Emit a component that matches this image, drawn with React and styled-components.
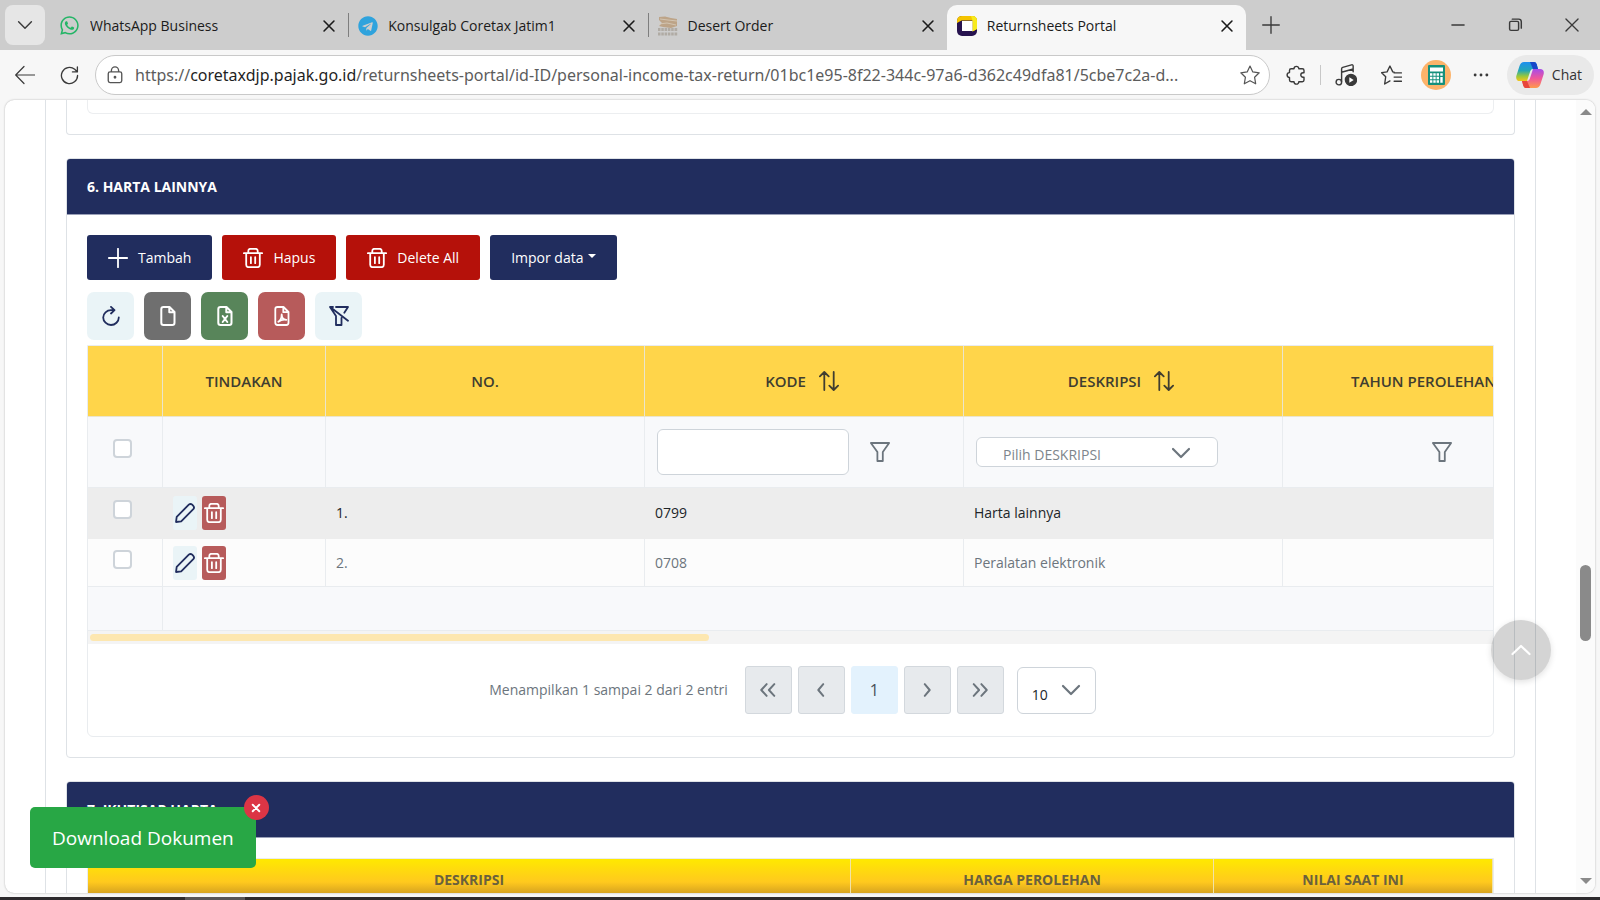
import { useState } from "react";
import styled, { createGlobalStyle, css } from "styled-components";
import { FaWhatsapp, FaTelegram } from "react-icons/fa";

const GlobalStyle = createGlobalStyle`
  *, *::before, *::after {
    box-sizing: border-box;
  }

  body {
    margin: 0;
    background: #f7f7f7;
    color: #6c757d;
    font-family: "Open Sans", "Noto Sans", sans-serif;
    font-size: 14px;
    line-height: 20px;
  }

  button, input, select {
    font: inherit;
    color: inherit;
    margin: 0;
  }

  button {
    cursor: pointer;
  }
`;

/* ---------- icons ---------- */

const Svg = styled.svg.attrs({ viewBox: "0 0 20 20", "aria-hidden": true })`
  display: block;
  flex: none;
  width: ${({ $size = 20 }) => $size}px;
  height: ${({ $size = 20 }) => $size}px;
  fill: none;
  stroke: currentColor;
  stroke-width: ${({ $stroke = 1.5 }) => $stroke};
  stroke-linecap: round;
  stroke-linejoin: round;
`;

const icons = {
  chevronDown: <path d="M2 6l8 8 8-8" />,
  chevronUp: <path d="M1.500 14l8.500-8 8.500 8" />,
  chevronLeft: <path d="M12.500 3.500L7 10l5.500 6.500" />,
  chevronRight: <path d="M7.500 3.500L13 10l-5.500 6.500" />,
  chevronsLeft: <path d="M8.500 3.500L2.500 10l6 6.500M17 3.500L11 10l6 6.500" />,
  chevronsRight: <path d="M3 3.500L9 10l-6 6.500M11.500 3.500l6 6.500-6 6.500" />,
  close: <path d="M4.500 4.500l11 11M15.500 4.500l-11 11" />,
  plus: <path d="M10 .8v18.400M.8 10h18.400" />,
  minus: <path d="M4 10h12" />,
  restore: (
    <path d="M4 7.500q0-1.500 1.500-1.500h7q1.500 0 1.500 1.500v7q0 1.500-1.500 1.500h-7q-1.500 0-1.500-1.500zM7 3.500h7q3 0 3 3v7" />
  ),
  back: <path d="M19.500 10H1M9 1.500L.7 10 9 18.500" />,
  reload: <path d="M18.500 10a8.500 8.500 0 1 1-3-6.500l2.600 2.600M18.300 1v5.200h-5.200" />,
  lock: (
    <>
      <path d="M2.500 8.500q0-2 2-2h11q2 0 2 2v8q0 2-2 2h-11q-2 0-2-2zM6 6.500V5a4 4 0 0 1 8 0v1.500" />
      <circle cx="10" cy="12.500" r=".8" fill="currentColor" />
    </>
  ),
  star: (
    <path d="M10 1l2.800 5.900 6.400.9-4.600 4.500 1.100 6.500L10 15.700l-5.700 3.100 1.100-6.500L.8 7.800l6.400-.9z" />
  ),
  puzzle: (
    <path d="M5.200 3.800H8a2.400 2.400 0 0 1 4.800 0h3.500q1.700 0 1.700 1.700v2.300h-1a2.200 2.200 0 0 0 0 4.400h1v2.800q0 1.700-1.700 1.700h-3.500a2.400 2.400 0 0 1-4.800 0H5.200q-1.700 0-1.700-1.700v-2.600a2.400 2.400 0 0 1 0-4.800V5.500q0-1.700 1.700-1.700z" />
  ),
  favourites: (
    <path d="M12.500 6.800l-1.300-.3L8.500 1 5.800 6.500l-5.200.8 3.900 3.800-1 7 5-2.900M12.500 7.500h7M12.500 11.500h7M12.500 15.500h7" />
  ),
  media: (
    <>
      <path d="M6 16V4.500q0-1 1-1.400l8-2.300q1.500-.3 1.500 1V7M6 7.500l10.500-3" />
      <circle cx="3.500" cy="16.500" r="2.500" />
      <circle cx="14.500" cy="14.500" r="5" fill="currentColor" />
      <path d="M13 12v5l4-2.500z" fill="#fff" stroke="none" />
    </>
  ),
  dots: (
    <g fill="currentColor" stroke="none">
      <circle cx="3.500" cy="10" r="1.600" />
      <circle cx="10" cy="10" r="1.600" />
      <circle cx="16.500" cy="10" r="1.600" />
    </g>
  ),
  trash: (
    <path d="M.8 5.200h18.400M3.200 5.200v11.600q0 2.400 2.400 2.400h8.800q2.400 0 2.400-2.400V5.200M5.300 5.200V3q0-2.200 2.200-2.200h5Q14.700.8 14.700 3v2.200M7.900 9.200v6M12.200 9.200v6" />
  ),
  pencil: (
    <path d="M1 19l.7-5.200L13.800 1.700q1.700-1.500 3.400 0l1.100 1.100q1.500 1.700 0 3.400L6.200 18.300z" />
  ),
  refresh: (
    <path d="M12.500 4.200H10C5.800 4.200 2.200 7.400 2.200 11.400S5.800 19 10 19s7.800-3.500 7.800-7.500M10 .9l3.500 3.300L10 7.500" />
  ),
  file: (
    <path d="M5.500 1h6L16.500 6v10.800q0 2.200-2.200 2.200H5.500q-2.200 0-2.200-2.200V3.200Q3.300 1 5.500 1zM11.300 1v5.200h5.200" />
  ),
  excel: (
    <path d="M5.500 1h6L16.500 6v10.800q0 2.200-2.200 2.200H5.500q-2.200 0-2.200-2.200V3.200Q3.300 1 5.500 1zM11.300 1v5.200h5.200M7.700 10l4.600 6M12.300 10l-4.600 6" />
  ),
  pdf: (
    <path d="M5.500 1h6L16.500 6v10.800q0 2.200-2.200 2.200H5.500q-2.200 0-2.200-2.200V3.200Q3.300 1 5.500 1zM11.300 1v5.200h5.200M6.300 15.800q3.400-2.200 3.400-7.300 0 5 4.600 5.300-4.300-.8-8 2z" />
  ),
  filter: <path d="M.9 1h18.200l-6.300 9v9H7.400v-9z" />,
  filterSlash: (
    <path d="M7 1h12l-3.700 5.800M4 1H1l6 9v9h5.500v-7M1.500 1.200l17.500 13.500" />
  ),
  sort: (
    <path d="M5.300 19V1.200M.9 5.400L5.300 1l4.400 4.400M14.700 1v17.800M10.300 14.600l4.400 4.400 4.400-4.400" />
  ),
};

const Icon = ({ name, size, stroke }) => (
  <Svg $size={size} $stroke={stroke}>
    {icons[name]}
  </Svg>
);

const PortalLogo = () => (
  <svg width="20" height="20" viewBox="0 0 20 20" aria-hidden="true">
    <rect width="20" height="20" rx="5" fill="#27134f" />
    <path d="M0 7V5q0-5 5-5h10q5 0 5 5v8l-4.500 2.500V4.500H4.500z" fill="#f5c400" />
    <path d="M14 0h1q5 0 5 5v8l-4.500 2.500V4.500z" fill="#f7ea1c" />
    <rect x="5" y="5" width="10.500" height="10" fill="#fff" />
  </svg>
);

const DesertLogo = () => (
  <svg width="20" height="20" viewBox="0 0 20 20" aria-hidden="true">
    <path d="M1 1l6-.5 6 1.500 6 1v7l-6 2-8-1-4-1 3-3-3-3z" fill="#bda488" />
    <path d="M2 3l8 1 9 1M1 8l8-1 9 2" stroke="#d8cdbd" strokeWidth=".8" fill="none" />
    <path d="M0 13.500h20M0 18h20" stroke="#b0aba4" strokeWidth="3" strokeDasharray="2.500 .8" />
  </svg>
);

const CopilotLogo = () => (
  <svg width="28" height="26" viewBox="0 0 28 26" aria-hidden="true">
    <defs>
      <linearGradient id="copilotA" x1="0" y1="0" x2="0" y2="1">
        <stop offset="0" stopColor="#1d8ff0" />
        <stop offset=".45" stopColor="#23a7b5" />
        <stop offset=".75" stopColor="#9ac83a" />
        <stop offset="1" stopColor="#f5c51c" />
      </linearGradient>
      <linearGradient id="copilotB" x1="0" y1="0" x2="0" y2="1">
        <stop offset="0" stopColor="#a64bea" />
        <stop offset=".5" stopColor="#f0579a" />
        <stop offset="1" stopColor="#ff9a4a" />
      </linearGradient>
    </defs>
    <path d="M8 0h10q2 0 2.700 2.200L22 7h-5q-2 0-2.700 2L11 19H4q-4.500 0-3.700-5L3.500 4Q4.800 0 8 0z" fill="url(#copilotA)" />
    <path d="M14 0h4q2 0 2.700 2.200L22 7h-5z" fill="#1747c9" />
    <path d="M20 26H10q-2 0-2.700-2.200L6 19h5q2 0 2.700-2L17 7h7q4.500 0 3.700 5l-3.200 10q-1.300 4-4.500 4z" fill="url(#copilotB)" />
    <path d="M14 26h-4q-2 0-2.700-2.200L6 19h5z" fill="#e8453c" />
  </svg>
);

const CalculatorLogo = () => (
  <svg width="30" height="30" viewBox="0 0 30 30" aria-hidden="true">
    <circle cx="15" cy="15" r="15" fill="#fcb36a" />
    <rect x="7" y="5" width="17" height="20" rx="1" fill="#15907c" />
    <rect x="9" y="7.500" width="13" height="4" fill="#fff" />
    <path d="M9 14.500h9M9 18h9M9 21.500h9" stroke="#fff" strokeWidth="2.400" strokeDasharray="2.400 .9" />
    <path d="M20.500 13.300v2.400M20.500 17v5.700" stroke="#fff" strokeWidth="2.400" />
  </svg>
);

/* ---------- browser chrome ---------- */

const Window = styled.div`
  display: flex;
  flex-direction: column;
  height: 100vh;
  overflow: hidden;
`;

const TabStrip = styled.header`
  display: flex;
  align-items: center;
  flex: none;
  height: 50px;
  padding-left: 5px;
  background: #cdcdcd;
  color: #1b1b1b;
`;

const PlainButton = styled.button`
  display: flex;
  align-items: center;
  justify-content: center;
  flex: none;
  width: ${({ $width = 40 }) => $width}px;
  height: 40px;
  padding: 0;
  border: 0;
  border-radius: 8px;
  background: ${({ $filled }) => ($filled ? "#e6e6e6" : "none")};
  color: #3a3a3a;
`;

const Tabs = styled.nav`
  display: flex;
  flex: 0 1 1201px;
  min-width: 0;
  align-self: stretch;
  padding: 5px 0 0 4px;
`;

const Tab = styled.div`
  position: relative;
  display: flex;
  flex: 1 1 0;
  min-width: 0;
  align-items: center;
  gap: 10px;
  height: 45px;
  padding: 0 10px 4px;
  border-radius: 10px 10px 0 0;

  ${({ $active }) =>
    $active
      ? css`
          background: #f7f7f7;
        `
      : css`
          & + &::before {
            content: "";
            position: absolute;
            left: 0;
            top: 8px;
            width: 1px;
            height: 24px;
            background: #7e7e7e;
          }
        `}
`;

const TabTitle = styled.a`
  flex: 1;
  overflow: hidden;
  white-space: nowrap;
  color: inherit;
  text-decoration: none;
`;

const TabClose = styled.button`
  display: flex;
  padding: 0;
  border: 0;
  background: none;
`;

const WindowControls = styled.div`
  display: flex;
  margin-left: auto;
`;

const Toolbar = styled.div`
  display: flex;
  align-items: center;
  flex: none;
  height: 50px;
  padding: 0 6px 0 3px;
`;

const Address = styled.div`
  display: flex;
  align-items: center;
  flex: 1;
  min-width: 0;
  gap: 11px;
  height: 40px;
  margin: 0 2px 0 3px;
  padding: 0 9px 0 10px;
  border: 1px solid #c9c9c9;
  border-radius: 20px;
  background: #fff;
  color: #555;
`;

const Url = styled.a`
  flex: 1;
  overflow: hidden;
  white-space: nowrap;
  color: #5c5c5c;
  font-family: "Noto Sans", sans-serif;
  font-size: 16px;
  line-height: 24px;
  text-decoration: none;

  b {
    font-weight: 400;
    color: #1f1f1f;
  }
`;

const Divider = styled.span`
  width: 1px;
  height: 20px;
  background: #c8c8c8;
`;

const ChatButton = styled.button`
  display: flex;
  align-items: center;
  gap: 8px;
  height: 40px;
  margin-left: 4px;
  padding: 0 12px 0 9px;
  border: 0;
  border-radius: 20px;
  background: #e9e9e9;
  color: #333;
`;

const Taskbar = styled.footer`
  flex: none;
  height: 3px;
  margin-top: 4px;
  background: linear-gradient(90deg, #2d2a2d 185px, #585558 185px 245px, #2d2a2d 245px);
`;

/* ---------- page ---------- */

const Viewport = styled.div`
  position: relative;
  display: flex;
  flex: 1;
  min-height: 0;
  margin: 0 5px;
  overflow: hidden;
  border-radius: 9px;
  background: #fff;
  box-shadow: 0 0 2px rgba(0, 0, 0, 0.3);
`;

const Content = styled.main`
  display: flex;
  flex: 1;
  flex-direction: column;
  gap: 23px;
  min-width: 0;
  margin: 0 40px;
  padding: 0 20px;
  border: solid #dee2e6;
  border-width: 0 1px;
`;

const ScrollTrack = styled.div`
  display: flex;
  flex: none;
  flex-direction: column;
  justify-content: space-between;
  align-items: center;
  width: 19px;
  padding: 9px 0;
  background: #fbfbfb;
`;

const ScrollThumb = styled.span`
  width: 11px;
  height: 76px;
  margin-top: 213px;
  border-radius: 6px;
  background: #8a8a8a;
`;

const ScrollArrow = styled.span`
  border: solid transparent;
  border-width: 0 6px;
  ${({ $down }) => ($down ? "border-top: 6px solid #8a8a8a;" : "border-bottom: 6px solid #8a8a8a;")}
`;

const Card = styled.section`
  flex: none;
  border: 1px solid #dee2e6;
  border-top-width: ${({ $cut }) => ($cut ? 0 : "1px")};
  border-radius: ${({ $cut }) => ($cut ? "0 0 4px 4px" : "4px")};
`;

const CardTitle = styled.h2`
  margin: 0;
  padding: 18px 20px 17px;
  border-bottom: 1px solid #9aa0b8;
  border-radius: 3px 3px 0 0;
  background: #212d5e;
  color: #fff;
  font-size: 14px;
  font-weight: 700;
`;

const CardBody = styled.div`
  padding: ${({ $cut }) => ($cut ? "0 20px 20px" : "20px")};
`;

const PanelEnd = styled.div`
  height: 14px;
  border: 1px solid #eceef0;
  border-top: 0;
  border-radius: 0 0 6px 6px;
`;

const ButtonRow = styled.div`
  display: flex;
  gap: 10px;
  margin-bottom: ${({ $gap }) => $gap}px;
`;

const ActionButton = styled.button`
  display: flex;
  align-items: center;
  gap: 10px;
  height: 45px;
  padding: 0 21px;
  border: 0;
  border-radius: 3px;
  background: ${({ $danger }) => ($danger ? "#b5110a" : "#212d5e")};
  color: #fff;
`;

const Caret = styled.span`
  margin: 0 0 3px -6px;
  border: solid transparent;
  border-width: 4px 4px 0;
  border-top-color: #fff;
`;

const ToolButton = styled.button`
  display: flex;
  align-items: center;
  justify-content: center;
  width: 47px;
  height: 48px;
  padding: 0;
  border: 0;
  border-radius: 7px;
  background: ${({ $bg }) => $bg};
  color: ${({ $color = "#fff" }) => $color};
`;

const Panel = styled.div`
  overflow: hidden;
  border: 1px solid #e9ecef;
  border-radius: 0 0 6px 6px;
`;

const TableClip = styled.div`
  overflow: hidden;
`;

const Table = styled.table`
  width: ${({ $width }) => $width};
  table-layout: fixed;
  border-collapse: separate;
  border-spacing: 0;
`;

const HeadCell = styled.th`
  height: 71px;
  padding: 0;
  border: solid #ebe5cc;
  border-width: 0 1px 1px 0;
  background: #ffd54a;
  color: #403d30;
  font-size: 15px;
  font-weight: 600;
`;

const HeadLabel = styled.span`
  display: flex;
  align-items: center;
  justify-content: center;
  gap: 13px;
  padding-right: 4px;
`;

const FilterCell = styled.td`
  height: ${({ $footer }) => ($footer ? 44 : 71)}px;
  padding: 0 ${({ $check }) => ($check ? "5px 0 0" : "12px")};
  border: solid #e9ecef;
  border-width: 0 1px 1px 0;
  background: #f8f9fb;
`;

const FilterBox = styled.div`
  display: flex;
  align-items: center;
  justify-content: ${({ $center }) => ($center ? "center" : "flex-start")};
  gap: 21px;
`;

const TextFilter = styled.input`
  width: 192px;
  height: 46px;
  padding: 0 12px;
  border: 1px solid #ced4da;
  border-radius: 6px;
  background: #fff;
`;

const SelectWrap = styled.label`
  position: relative;
  display: inline-flex;
  color: #6c757d;

  svg {
    position: absolute;
    right: ${({ $inset }) => $inset}px;
    top: ${({ $top }) => $top}px;
    pointer-events: none;
  }
`;

const Select = styled.select`
  width: ${({ $width }) => $width}px;
  height: ${({ $height }) => $height}px;
  padding: ${({ $padding }) => $padding};
  border: 1px solid #ced4da;
  border-radius: 6px;
  appearance: none;
  background: #fff;
  color: ${({ $dark }) => ($dark ? "#212529" : "#7d858c")};
`;

const Checkbox = styled.input.attrs({ type: "checkbox" })`
  display: block;
  width: 19px;
  height: 19px;
  margin: 0 auto 7px;
  border: 2px solid #ced4da;
  border-radius: 4px;
  appearance: none;
  background: #fff;

  &:checked {
    background: #212d5e;
  }
`;

const Cell = styled.td`
  padding: 0 ${({ $check }) => ($check ? "5px 0 0" : "10px")};
`;

const Row = styled.tr`
  height: ${({ $selected }) => ($selected ? 51 : 48)}px;
  background: ${({ $selected }) => ($selected ? "#ededed" : "#fcfcfc")};
  color: ${({ $selected }) => ($selected ? "#212529" : "#6c757d")};

  ${Cell} {
    border: solid ${({ $selected }) => ($selected ? "#ededed" : "#e9ecef")};
    border-width: 0 1px 1px 0;
  }
`;

const RowActions = styled.div`
  display: flex;
  gap: 5px;
`;

const RowButton = styled.button`
  display: flex;
  align-items: center;
  justify-content: center;
  width: 24px;
  height: 34px;
  padding: 0;
  border: 0;
  border-radius: 3px;
  background: ${({ $danger }) => ($danger ? "#b75b5b" : "#eaf4f7")};
  color: ${({ $danger }) => ($danger ? "#fff" : "#212d5e")};
`;

const HScroll = styled.div`
  padding: 3px 2px;
  background: #f4f4f4;
`;

const HThumb = styled.div`
  width: 44.2%;
  height: 7px;
  border-radius: 4px;
  background: #fde7b0;
`;

const Paginator = styled.div`
  display: flex;
  align-items: center;
  justify-content: center;
  gap: 6px;
  padding: 22px 0 22px 4px;

  p {
    margin: 0 11px 0 0;
  }

  label {
    margin-left: 7px;
  }
`;

const PageButton = styled.button`
  display: flex;
  align-items: center;
  justify-content: center;
  width: 47px;
  height: 48px;
  padding: 0;
  border: 1px solid ${({ $current }) => ($current ? "#e3f2fd" : "#d3d8dd")};
  border-radius: 3px;
  background: ${({ $current }) => ($current ? "#e3f2fd" : "#e7eaed")};
  color: ${({ $current }) => ($current ? "#495057" : "#6c757d")};
  font-size: 16px;
`;

const SummaryHead = styled.th`
  width: ${({ $width }) => $width};
  height: 42px;
  padding: 0;
  border-right: 1px solid #f1e3a8;
  color: #6a613c;
  font-size: 14px;
  font-weight: 700;
`;

const SummaryRow = styled.tr`
  background: linear-gradient(#ffe900, #ffc91e 55%, #d9a520 80%);
`;

/* ---------- floating parts ---------- */

const Download = styled.div`
  position: absolute;
  left: 25px;
  bottom: 25px;
`;

const DownloadButton = styled.button`
  display: block;
  height: 61px;
  padding: 0 22px;
  border: 0;
  border-radius: 5px;
  background: #28a745;
  color: #fff;
  font-size: 19px;
`;

const DismissButton = styled.button`
  position: absolute;
  top: -12px;
  right: -13px;
  display: flex;
  align-items: center;
  justify-content: center;
  width: 25px;
  height: 25px;
  padding: 0;
  border: 0;
  border-radius: 50%;
  background: #dc3545;
  color: #fff;
`;

const TopButton = styled.button`
  position: absolute;
  right: 44px;
  bottom: 213px;
  display: flex;
  align-items: center;
  justify-content: center;
  width: 60px;
  height: 60px;
  border: 0;
  border-radius: 50%;
  background: rgba(0, 0, 0, 0.17);
  box-shadow: 0 2px 6px rgba(0, 0, 0, 0.12);
  color: #fff;
`;

const tabs = [
  { title: "WhatsApp Business", icon: <FaWhatsapp size={21} color="#25b567" /> },
  { title: "Konsulgab Coretax Jatim1", icon: <FaTelegram size={20} color="#2fa3dd" /> },
  { title: "Desert Order", icon: <DesertLogo /> },
  { title: "Returnsheets Portal", icon: <PortalLogo />, active: true },
];

const assets = [
  { no: "1.", code: "0799", description: "Harta lainnya", selected: true },
  { no: "2.", code: "0708", description: "Peralatan elektronik" },
];

const BrowserChrome = () => (
  <>
    <TabStrip>
      <PlainButton $filled aria-label="Search tabs">
        <Icon name="chevronDown" size={16} stroke={1.8} />
      </PlainButton>
      <Tabs>
        {tabs.map((tab) => (
          <Tab key={tab.title} $active={tab.active}>
            {tab.icon}
            <TabTitle href="#">{tab.title}</TabTitle>
            <TabClose aria-label={`Close ${tab.title}`}>
              <Icon name="close" size={18} stroke={1.8} />
            </TabClose>
          </Tab>
        ))}
      </Tabs>
      <PlainButton $width={50} aria-label="New tab">
        <Icon name="plus" size={18} />
      </PlainButton>
      <WindowControls>
        <PlainButton $width={57} aria-label="Minimize">
          <Icon name="minus" stroke={1.6} />
        </PlainButton>
        <PlainButton $width={57} aria-label="Restore">
          <Icon name="restore" size={18} stroke={1.6} />
        </PlainButton>
        <PlainButton $width={57} aria-label="Close">
          <Icon name="close" size={22} stroke={1.2} />
        </PlainButton>
      </WindowControls>
    </TabStrip>

    <Toolbar>
      <PlainButton $width={44} aria-label="Back">
        <Icon name="back" stroke={1.2} />
      </PlainButton>
      <PlainButton $width={45} aria-label="Reload">
        <Icon name="reload" size={19} stroke={1.4} />
      </PlainButton>
      <Address>
        <Icon name="lock" size={18} />
        <Url href="#">
          https://<b>coretaxdjp.pajak.go.id</b>
          /returnsheets-portal/id-ID/personal-income-tax-return/01bc1e95-8f22-344c-97a6-d362c49dfa81/5cbe7c2a-d...
        </Url>
        <Icon name="star" stroke={1.2} />
      </Address>
      <PlainButton $width={48} aria-label="Extensions">
        <Icon name="puzzle" size={20} stroke={1.4} />
      </PlainButton>
      <Divider />
      <PlainButton $width={50} aria-label="Media">
        <Icon name="media" size={22} stroke={1.3} />
      </PlainButton>
      <PlainButton $width={42} aria-label="Favorites">
        <Icon name="favourites" size={21} stroke={1.3} />
      </PlainButton>
      <PlainButton $width={46} aria-label="Profile">
        <CalculatorLogo />
      </PlainButton>
      <PlainButton $width={44} aria-label="More">
        <Icon name="dots" size={18} />
      </PlainButton>
      <ChatButton>
        <CopilotLogo />
        Chat
      </ChatButton>
    </Toolbar>
  </>
);

const AssetTable = () => {
  const [checked, setChecked] = useState([]);

  const toggle = (no) =>
    setChecked(checked.includes(no) ? checked.filter((n) => n !== no) : [...checked, no]);

  return (
    <TableClip>
      <Table $width="1833px">
        <colgroup>
          <col width="75" />
          <col width="163" />
          <col width="319" />
          <col width="319" />
          <col width="319" />
          <col width="319" />
          <col width="319" />
        </colgroup>
        <thead>
          <tr>
            <HeadCell />
            <HeadCell>TINDAKAN</HeadCell>
            <HeadCell>NO.</HeadCell>
            {["KODE", "DESKRIPSI", "TAHUN PEROLEHAN"].map((label) => (
              <HeadCell key={label}>
                <HeadLabel>
                  {label}
                  <Icon name="sort" stroke={1.8} />
                </HeadLabel>
              </HeadCell>
            ))}
            <HeadCell />
          </tr>
        </thead>
        <tbody>
          <tr>
            <FilterCell $check>
              <Checkbox
                aria-label="Pilih semua"
                checked={checked.length === assets.length}
                onChange={(e) => setChecked(e.target.checked ? assets.map((a) => a.no) : [])}
              />
            </FilterCell>
            <FilterCell />
            <FilterCell />
            <FilterCell>
              <FilterBox>
                <TextFilter aria-label="Filter kode" />
                <Icon name="filter" stroke={1.8} />
              </FilterBox>
            </FilterCell>
            <FilterCell>
              <SelectWrap $inset={27} $top={6}>
                <Select
                  $width={242}
                  $height={30}
                  $padding="5px 40px 0 26px"
                  aria-label="Filter deskripsi"
                >
                  <option>Pilih DESKRIPSI</option>
                </Select>
                <Icon name="chevronDown" stroke={2.2} />
              </SelectWrap>
            </FilterCell>
            <FilterCell>
              <FilterBox $center>
                <Icon name="filter" stroke={1.8} />
              </FilterBox>
            </FilterCell>
            <FilterCell />
          </tr>
          {assets.map((asset) => (
            <Row key={asset.no} $selected={asset.selected}>
              <Cell $check>
                <Checkbox
                  aria-label={`Pilih ${asset.description}`}
                  checked={checked.includes(asset.no)}
                  onChange={() => toggle(asset.no)}
                />
              </Cell>
              <Cell>
                <RowActions>
                  <RowButton aria-label="Ubah">
                    <Icon name="pencil" stroke={1.8} />
                  </RowButton>
                  <RowButton $danger aria-label="Hapus">
                    <Icon name="trash" stroke={1.8} />
                  </RowButton>
                </RowActions>
              </Cell>
              <Cell>{asset.no}</Cell>
              <Cell>{asset.code}</Cell>
              <Cell>{asset.description}</Cell>
              <Cell />
              <Cell />
            </Row>
          ))}
        </tbody>
        <tfoot>
          <tr>
            <FilterCell $footer />
            <FilterCell $footer colSpan={6} />
          </tr>
        </tfoot>
      </Table>
    </TableClip>
  );
};

const App = () => (
  <>
    <GlobalStyle />
    <Window>
      <BrowserChrome />

      <Viewport>
        <Content>
          <Card $cut>
            <CardBody $cut>
              <PanelEnd />
            </CardBody>
          </Card>

          <Card>
            <CardTitle>6. HARTA LAINNYA</CardTitle>
            <CardBody>
              <ButtonRow $gap={12}>
                <ActionButton>
                  <Icon name="plus" stroke={1.8} />
                  Tambah
                </ActionButton>
                <ActionButton $danger>
                  <Icon name="trash" stroke={1.8} />
                  Hapus
                </ActionButton>
                <ActionButton $danger>
                  <Icon name="trash" stroke={1.8} />
                  Delete All
                </ActionButton>
                <ActionButton>
                  Impor data
                  <Caret />
                </ActionButton>
              </ButtonRow>
              <ButtonRow $gap={5}>
                <ToolButton $bg="#eaf4f7" $color="#212d5e" aria-label="Muat ulang">
                  <Icon name="refresh" stroke={1.8} />
                </ToolButton>
                <ToolButton $bg="#6f6f6f" aria-label="Ekspor CSV">
                  <Icon name="file" stroke={2} />
                </ToolButton>
                <ToolButton $bg="#58855a" aria-label="Ekspor Excel">
                  <Icon name="excel" stroke={2} />
                </ToolButton>
                <ToolButton $bg="#b75b5b" aria-label="Ekspor PDF">
                  <Icon name="pdf" stroke={1.8} />
                </ToolButton>
                <ToolButton $bg="#eaf4f7" $color="#212d5e" aria-label="Hapus filter">
                  <Icon name="filterSlash" stroke={1.8} />
                </ToolButton>
              </ButtonRow>

              <Panel>
                <AssetTable />
                <HScroll>
                  <HThumb />
                </HScroll>
                <Paginator>
                  <p>Menampilkan 1 sampai 2 dari 2 entri</p>
                  <PageButton aria-label="Halaman pertama">
                    <Icon name="chevronsLeft" size={18} stroke={2.2} />
                  </PageButton>
                  <PageButton aria-label="Sebelumnya">
                    <Icon name="chevronLeft" size={18} stroke={2.2} />
                  </PageButton>
                  <PageButton $current>1</PageButton>
                  <PageButton aria-label="Berikutnya">
                    <Icon name="chevronRight" size={18} stroke={2.2} />
                  </PageButton>
                  <PageButton aria-label="Halaman terakhir">
                    <Icon name="chevronsRight" size={18} stroke={2.2} />
                  </PageButton>
                  <SelectWrap $inset={15} $top={13}>
                    <Select
                      $width={79}
                      $height={47}
                      $padding="9px 30px 0 14px"
                      $dark
                      aria-label="Baris per halaman"
                    >
                      <option>10</option>
                    </Select>
                    <Icon name="chevronDown" stroke={2.2} />
                  </SelectWrap>
                </Paginator>
              </Panel>
            </CardBody>
          </Card>

          <Card>
            <CardTitle>7. IKHTISAR HARTA</CardTitle>
            <CardBody>
              <Panel>
                <Table $width="100%">
                  <thead>
                    <SummaryRow>
                      <SummaryHead>DESKRIPSI</SummaryHead>
                      <SummaryHead $width="363px">HARGA PEROLEHAN</SummaryHead>
                      <SummaryHead $width="279px">NILAI SAAT INI</SummaryHead>
                    </SummaryRow>
                  </thead>
                </Table>
              </Panel>
            </CardBody>
          </Card>
        </Content>

        <ScrollTrack>
          <ScrollArrow />
          <ScrollThumb />
          <ScrollArrow $down />
        </ScrollTrack>

        <Download>
          <DownloadButton>Download Dokumen</DownloadButton>
          <DismissButton aria-label="Tutup">
            <Icon name="close" size={12} stroke={3.2} />
          </DismissButton>
        </Download>
        <TopButton aria-label="Kembali ke atas">
          <Icon name="chevronUp" stroke={2.2} />
        </TopButton>
      </Viewport>

      <Taskbar />
    </Window>
  </>
);

export default App;
